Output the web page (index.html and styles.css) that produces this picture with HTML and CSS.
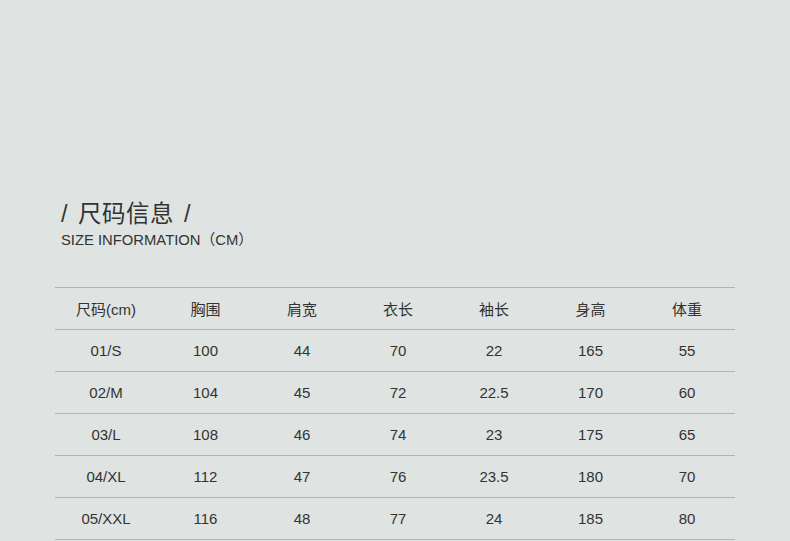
FILE: index.html
```html
<!DOCTYPE html>
<html>
<head>
<meta charset="utf-8">
<link rel="stylesheet" href="styles.css">
</head>
<body>
<div class="page">
  <div class="head">
    <div class="title">/ 尺码信息 /</div>
    <div class="sub">SIZE INFORMATION（CM）</div>
  </div>
  <table class="size">
    <colgroup>
      <col class="c1"><col class="c2"><col class="c3"><col class="c3"><col class="c3"><col class="c2"><col class="c3">
    </colgroup>
    <tr><td>尺码(cm)</td><td>胸围</td><td>肩宽</td><td>衣长</td><td>袖长</td><td>身高</td><td>体重</td></tr>
    <tr><td>01/S</td><td>100</td><td>44</td><td>70</td><td>22</td><td>165</td><td>55</td></tr>
    <tr><td>02/M</td><td>104</td><td>45</td><td>72</td><td>22.5</td><td>170</td><td>60</td></tr>
    <tr><td>03/L</td><td>108</td><td>46</td><td>74</td><td>23</td><td>175</td><td>65</td></tr>
    <tr><td>04/XL</td><td>112</td><td>47</td><td>76</td><td>23.5</td><td>180</td><td>70</td></tr>
    <tr><td>05/XXL</td><td>116</td><td>48</td><td>77</td><td>24</td><td>185</td><td>80</td></tr>
  </table>
</div>
</body>
</html>
```
FILE: styles.css
```css
html, body { margin: 0; padding: 0; }
body {
  background: #dfe4e2;
  width: 790px;
  height: 541px;
  overflow: hidden;
  font-family: "Liberation Sans", "Noto Sans CJK SC", sans-serif;
  color: #333;
}
.page { padding: 198px 55px 0 55px; }
.head { padding-left: 6px; }
.title { font-size: 23.5px; line-height: 30px; color: #333; letter-spacing: 0.5px; word-spacing: 3px; margin-top: 1px; }
.sub { font-size: 14.8px; line-height: 18px; margin-top: 2px; color: #333; }
.size {
  margin-top: 38px;
  width: 680px;
  border-collapse: collapse;
  table-layout: fixed;
}
.c1 { width: 102px; }
.c2 { width: 97px; }
.c3 { width: 96px; }
.size tr { border-top: 1px solid #b2b4b3; border-bottom: 1px solid #b2b4b3; }
.size td {
  height: 41px;
  padding: 0;
  text-align: center;
  font-size: 15px;
  vertical-align: middle;
}
```
